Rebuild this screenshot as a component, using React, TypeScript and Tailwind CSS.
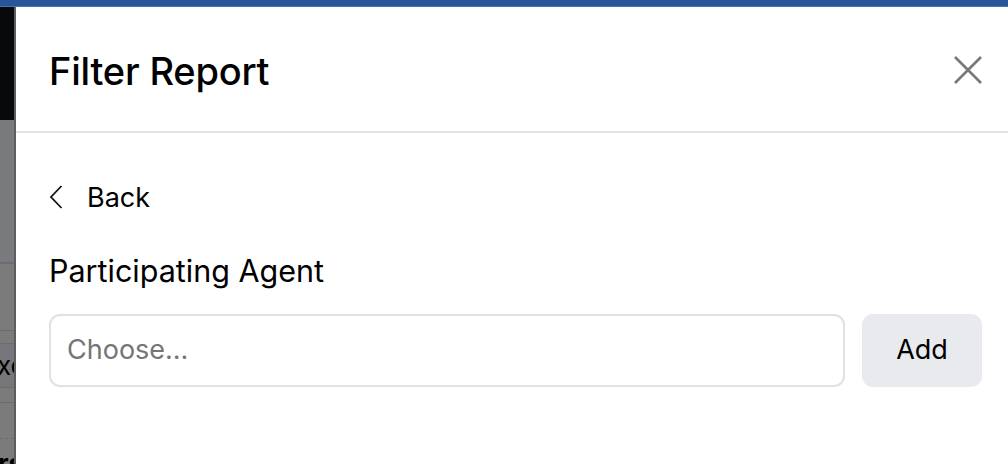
import React from "react";

export default function App() {
  const font = { fontFamily: "Inter, 'Noto Sans', sans-serif" };
  return (
    <div className="w-[1008px] h-[464px] flex flex-col overflow-hidden bg-white" style={font}>
      <div className="h-[6px] bg-[#29559a] shrink-0" />
      <div className="h-[1px] bg-[#4a72ad] shrink-0" />
      <div className="flex flex-1 min-h-0">
        {/* backdrop strip */}
        <div className="w-[14px] flex flex-col overflow-hidden shrink-0">
          <div className="h-[113px] bg-[#07090d] shrink-0" />
          <div className="h-[142px] bg-[#797a7d] shrink-0" />
          <div className="h-[2px] bg-[#6c6d70] shrink-0" />
          <div className="h-[66px] bg-[#7b7b7b] shrink-0" />
          <div className="h-[1px] bg-[#6c6c6c] shrink-0" />
          <div className="h-[12px] bg-[#7b7b7b] shrink-0" />
          <div className="h-[1px] bg-[#6c6c6c] shrink-0" />
          <div className="h-[43px] bg-[#76777a] shrink-0 flex items-center overflow-hidden">
            <span className="text-[26px] leading-none text-black -ml-[3px]">xe</span>
          </div>
          <div className="h-[1px] bg-[#6c6c6c] shrink-0" />
          <div className="h-[14px] bg-[#7b7b7b] shrink-0" />
          <div className="h-[1px] bg-[#6c6c6c] shrink-0" />
          <div className="h-[35px] bg-[#7b7b7b] shrink-0" />
          <div className="h-[1px] shrink-0 border-t border-dashed border-[#6c6c6c] bg-[#7b7b7b]" />
          <div className="flex-1 bg-[#7b7b7b] overflow-hidden relative">
            <span className="absolute top-[12px] left-[-2px] text-[26px] font-bold leading-none text-black">rs</span>
          </div>
        </div>
        <div className="w-[2px] bg-[#5e5e5e] shrink-0" />
        {/* panel */}
        <div className="flex-1 flex flex-col bg-white min-w-0">
          <div className="h-[126px] shrink-0 flex items-center justify-between pl-[33px] pr-[26px] pt-[5px] border-b-2 border-[#e1e2e6]">
            <h1 className="text-[38px] font-medium text-black tracking-[-0.2px]">Filter Report</h1>
            <svg width="28" height="28" viewBox="0 0 28 28" className="-mt-[4px]">
              <path d="M1 1 L27 27 M27 1 L1 27" stroke="#777777" strokeWidth="2.6" fill="none" />
            </svg>
          </div>
          <div className="pl-[33px] pr-[26px] pt-[47px] flex flex-col">
            <div className="flex items-center h-[34px]">
              <svg width="14" height="24" viewBox="0 0 14 24" className="shrink-0">
                <path d="M12.5 1 L2 12 L12.5 23" stroke="#111111" strokeWidth="1.8" fill="none" strokeLinejoin="miter" />
              </svg>
              <span className="ml-[24px] text-[27px] text-black leading-none">Back</span>
            </div>
            <div className="mt-[42px] text-[30.5px] text-black leading-none">Participating Agent</div>
            <div className="mt-[27px] flex items-stretch gap-[17px]">
              <div className="flex-1 h-[73px] border-2 border-[#dfe1e6] rounded-[11px] flex items-center pl-[16px]">
                <span className="text-[27px] text-[#757575]">Choose...</span>
              </div>
              <button className="w-[120px] h-[73px] rounded-[11px] bg-[#e9eaee] text-[27px] text-black flex items-center justify-center">
                Add
              </button>
            </div>
          </div>
        </div>
      </div>
    </div>
  );
}
